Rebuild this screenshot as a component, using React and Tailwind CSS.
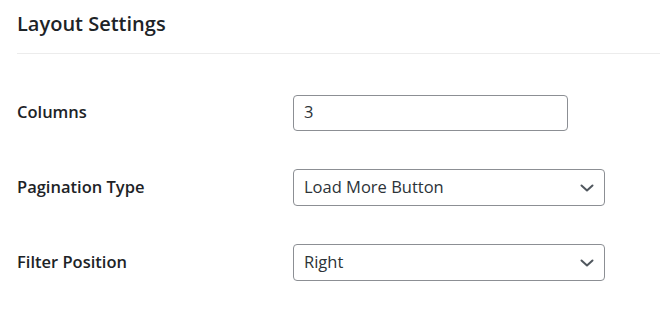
import React from "react";

const font = { fontFamily: '"Open Sans", "Noto Sans", sans-serif' };

function Chevron() {
  return (
    <svg width="14" height="8" viewBox="0 0 14 8" fill="none" className="shrink-0">
      <path d="M1.5 1.5 L7 6.5 L12.5 1.5" stroke="#50575e" strokeWidth="2" strokeLinecap="round" strokeLinejoin="round" />
    </svg>
  );
}

function Select({ value }) {
  return (
    <div className="flex h-[37px] w-[312px] items-center justify-between rounded-[4px] border border-[#8c8f94] bg-white pl-[10px] pr-[10px] text-[16.5px] text-[#2c3338]">
      <span>{value}</span>
      <Chevron />
    </div>
  );
}

function Row({ label, children }) {
  return (
    <div className="flex h-[75px] items-center">
      <div className="w-[276px] text-[16.5px] font-semibold text-[#1d2327]">{label}</div>
      {children}
    </div>
  );
}

export default function App() {
  return (
    <div className="h-[313px] w-[660px] overflow-hidden bg-white pl-[17px]" style={font}>
      <div className="flex h-[54px] items-center border-b border-[#ececec] pb-[5px]">
        <h2 className="text-[20px] font-semibold text-[#1d2327]">Layout Settings</h2>
      </div>
      <div className="pt-[21px]">
        <Row label="Columns">
          <div className="flex h-[36px] w-[275px] items-center rounded-[4px] border border-[#8c8f94] bg-white pl-[10px] text-[16.5px] text-[#2c3338]">
            3
          </div>
        </Row>
        <Row label="Pagination Type">
          <Select value="Load More Button" />
        </Row>
        <Row label="Filter Position">
          <Select value="Right" />
        </Row>
      </div>
    </div>
  );
}
